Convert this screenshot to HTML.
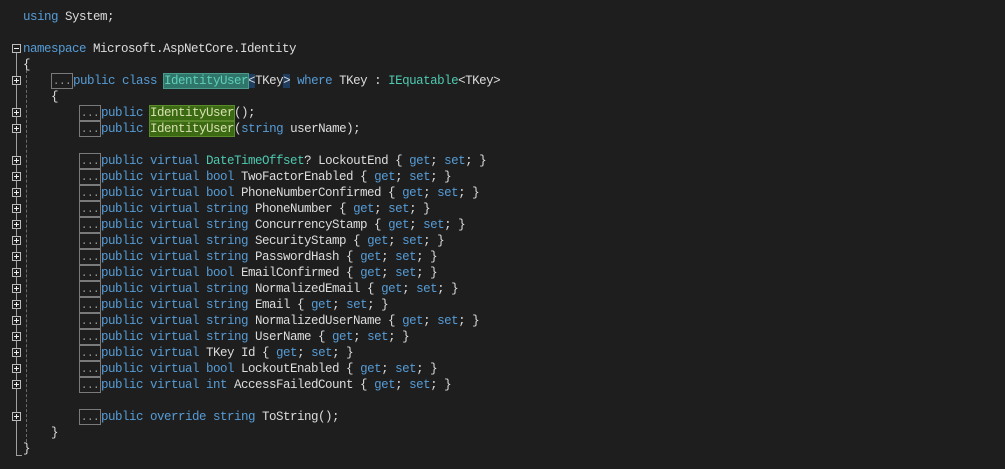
<!DOCTYPE html><html><head><style>
body{margin:0;background:#1e1e1e;width:1005px;height:469px;overflow:hidden;position:relative;font-family:"Liberation Mono",monospace;font-size:12.5px;letter-spacing:-0.5px;color:#dcdcdc}
.l{position:absolute;left:23px;height:16px;line-height:17px;white-space:pre}
.k{color:#569cd6}.t{color:#4ec9b0}
.b{display:inline-block;box-sizing:border-box;width:22px;height:16px;border:1px solid #7a7a7a;color:#9a9a9a;line-height:16px;vertical-align:top;font-size:11px;letter-spacing:-0.5px;text-align:center}
.i1{padding-left:28px}.i2{padding-left:56px}
.ht{background:#2f756a;outline:1px solid #4a9a8c;color:#5fd0b8}
.hg{background:#3b6a12;outline:1px solid #5a8a2a;color:#d8e0b0}
.hb{background:#1f3d5e}
.pb{position:absolute;left:12px;width:9px;height:9px;box-sizing:border-box;border:1px solid #bbb;background:#1e1e1e}
.pb:before{content:"";position:absolute;left:1px;top:3px;width:5px;height:1px;background:#eee}
.pb.p:after{content:"";position:absolute;left:3px;top:1px;width:1px;height:5px;background:#eee}
</style></head><body>
<div style="position:absolute;left:16px;top:53px;width:1px;height:403px;background:#a0a0a0"></div>
<div style="position:absolute;left:16px;top:455px;width:6px;height:1px;background:#a0a0a0"></div>
<div style="position:absolute;left:26px;top:60px;width:0;height:382px;border-left:1px dashed #6a6a6a"></div>
<div class="pb" style="top:44px"></div>
<div class="pb p" style="top:76px"></div>
<div class="pb p" style="top:108px"></div>
<div class="pb p" style="top:124px"></div>
<div class="pb p" style="top:156px"></div><div class="pb p" style="top:172px"></div><div class="pb p" style="top:188px"></div><div class="pb p" style="top:204px"></div><div class="pb p" style="top:220px"></div><div class="pb p" style="top:236px"></div><div class="pb p" style="top:252px"></div><div class="pb p" style="top:268px"></div><div class="pb p" style="top:284px"></div><div class="pb p" style="top:300px"></div><div class="pb p" style="top:316px"></div><div class="pb p" style="top:332px"></div><div class="pb p" style="top:348px"></div><div class="pb p" style="top:364px"></div><div class="pb p" style="top:380px"></div>
<div class="pb p" style="top:412px"></div>

<div class="l" style="top:9px"><span class="k">using</span> System;</div>
<div class="l" style="top:41px"><span class="k">namespace</span> Microsoft.AspNetCore.Identity</div>
<div class="l" style="top:57px">{</div>
<div class="l i1" style="top:73px"><span class="b">...</span><span class="k">public class</span> <span class="ht">IdentityUser</span><span class="hb">&lt;</span>TKey<span class="hb">&gt;</span> <span class="k">where</span> TKey : <span class="t">IEquatable</span>&lt;TKey&gt;</div>
<div class="l i1" style="top:89px">{</div>
<div class="l i2" style="top:105px"><span class="b">...</span><span class="k">public</span> <span class="hg">IdentityUser</span>();</div>
<div class="l i2" style="top:121px"><span class="b">...</span><span class="k">public</span> <span class="hg">IdentityUser</span>(<span class="k">string</span> userName);</div>
<div class="l i2" style="top:153px"><span class="b">...</span><span class="k">public virtual</span> <span class="t">DateTimeOffset</span>? LockoutEnd { <span class="k">get</span>; <span class="k">set</span>; }</div>
<div class="l i2" style="top:169px"><span class="b">...</span><span class="k">public virtual bool</span> TwoFactorEnabled { <span class="k">get</span>; <span class="k">set</span>; }</div>
<div class="l i2" style="top:185px"><span class="b">...</span><span class="k">public virtual bool</span> PhoneNumberConfirmed { <span class="k">get</span>; <span class="k">set</span>; }</div>
<div class="l i2" style="top:201px"><span class="b">...</span><span class="k">public virtual string</span> PhoneNumber { <span class="k">get</span>; <span class="k">set</span>; }</div>
<div class="l i2" style="top:217px"><span class="b">...</span><span class="k">public virtual string</span> ConcurrencyStamp { <span class="k">get</span>; <span class="k">set</span>; }</div>
<div class="l i2" style="top:233px"><span class="b">...</span><span class="k">public virtual string</span> SecurityStamp { <span class="k">get</span>; <span class="k">set</span>; }</div>
<div class="l i2" style="top:249px"><span class="b">...</span><span class="k">public virtual string</span> PasswordHash { <span class="k">get</span>; <span class="k">set</span>; }</div>
<div class="l i2" style="top:265px"><span class="b">...</span><span class="k">public virtual bool</span> EmailConfirmed { <span class="k">get</span>; <span class="k">set</span>; }</div>
<div class="l i2" style="top:281px"><span class="b">...</span><span class="k">public virtual string</span> NormalizedEmail { <span class="k">get</span>; <span class="k">set</span>; }</div>
<div class="l i2" style="top:297px"><span class="b">...</span><span class="k">public virtual string</span> Email { <span class="k">get</span>; <span class="k">set</span>; }</div>
<div class="l i2" style="top:313px"><span class="b">...</span><span class="k">public virtual string</span> NormalizedUserName { <span class="k">get</span>; <span class="k">set</span>; }</div>
<div class="l i2" style="top:329px"><span class="b">...</span><span class="k">public virtual string</span> UserName { <span class="k">get</span>; <span class="k">set</span>; }</div>
<div class="l i2" style="top:345px"><span class="b">...</span><span class="k">public virtual</span> TKey Id { <span class="k">get</span>; <span class="k">set</span>; }</div>
<div class="l i2" style="top:361px"><span class="b">...</span><span class="k">public virtual bool</span> LockoutEnabled { <span class="k">get</span>; <span class="k">set</span>; }</div>
<div class="l i2" style="top:377px"><span class="b">...</span><span class="k">public virtual int</span> AccessFailedCount { <span class="k">get</span>; <span class="k">set</span>; }</div>
<div class="l i2" style="top:409px"><span class="b">...</span><span class="k">public override string</span> ToString();</div>
<div class="l i1" style="top:425px">}</div>
<div class="l" style="top:441px">}</div>
</body></html>
